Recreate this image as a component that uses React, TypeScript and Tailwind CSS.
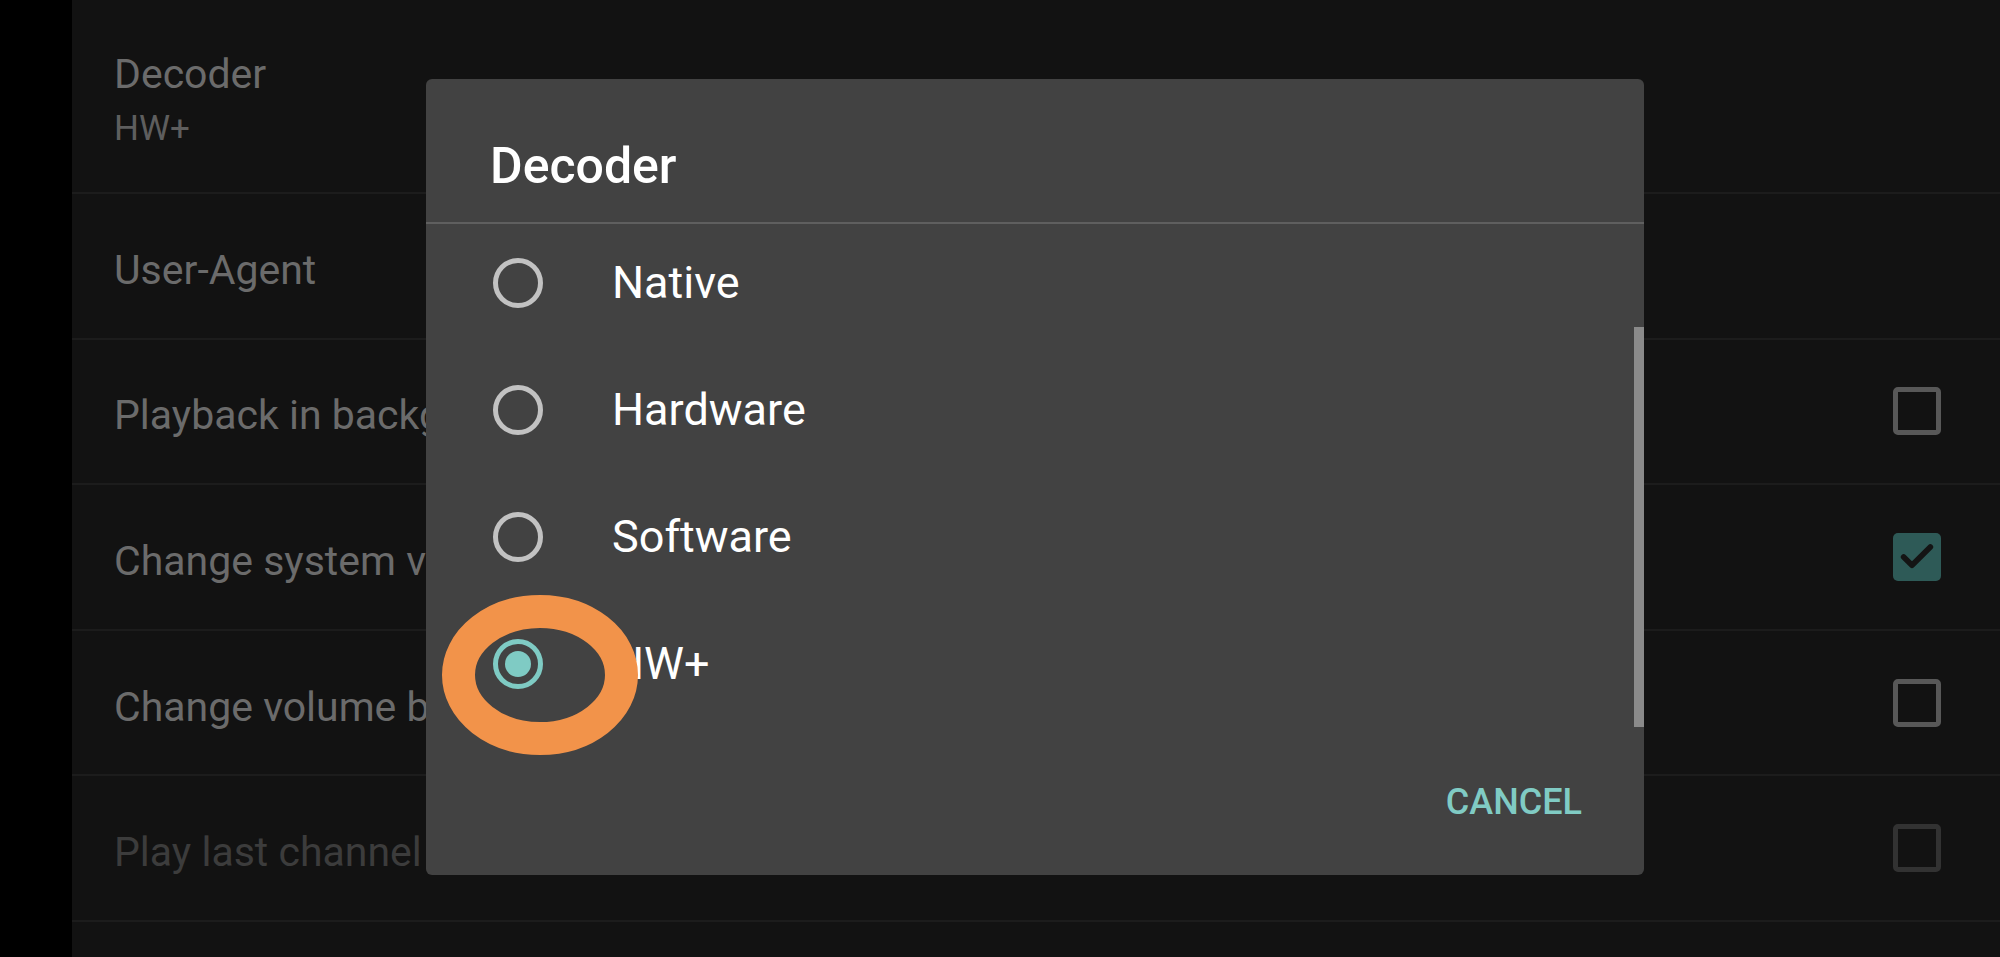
import { Check } from "lucide-react";

const rows = [
  { label: "User-Agent", box: null },
  { label: "Playback in background", box: "off" },
  { label: "Change system volume", box: "on" },
  { label: "Change volume by gestures", box: "off" },
  { label: "Play last channel on startup", box: "disabled" },
];

const options = ["Native", "Hardware", "Software", "HW+"];

function Box({ state }: { state: string }) {
  if (state === "on") {
    return (
      <div className="w-[48px] h-[48px] rounded-[5px] bg-[#2e5a57] flex items-center justify-center">
        <Check className="w-[40px] h-[40px] text-[#141414]" strokeWidth={3.4} />
      </div>
    );
  }
  return (
    <div
      className={
        state === "disabled"
          ? "w-[48px] h-[48px] rounded-[5px] border-[5px] border-[#323232]"
          : "w-[48px] h-[48px] rounded-[5px] border-[5px] border-[#585858]"
      }
    />
  );
}

export default function App() {
  return (
    <div className="w-[2000px] h-[957px] flex bg-black overflow-hidden font-['Roboto','Liberation_Sans',sans-serif]">
      <div className="w-[72px] shrink-0 bg-black" />

      <div className="relative flex-1 bg-[#121212]">
        {/* settings list behind the dialog */}
        <div className="flex flex-col">
          <div className="h-[194px] border-b-2 border-[#1c1c1c] pl-[42px] pt-[50px]">
            <div className="text-[41px] leading-[48px] text-[#6b6b6b]">Decoder</div>
            <div className="mt-[10px] text-[35px] leading-[42px] text-[#5e5e5e]">HW+</div>
          </div>

          {rows.map((r) => (
            <div
              key={r.label}
              className="h-[145.6px] border-b-2 border-[#1c1c1c] flex items-center justify-between pl-[42px] pr-[59px] pt-[8px]"
            >
              <span
                className={
                  r.box === "disabled"
                    ? "text-[41px] leading-[48px] text-[#3c3c3c] whitespace-nowrap"
                    : "text-[41px] leading-[48px] text-[#6b6b6b] whitespace-nowrap"
                }
              >
                {r.label}
              </span>
              {r.box && (
                <div className="-mt-[8px]">
                  <Box state={r.box} />
                </div>
              )}
            </div>
          ))}
        </div>

        {/* dialog */}
        <div className="absolute left-[354px] top-[79px] w-[1218px] h-[796px] rounded-[6px] bg-[#424242] flex flex-col">
          <div className="pt-[59px] pl-[64px] text-[50px] leading-[56px] font-medium text-white">
            Decoder
          </div>
          <div className="mt-[28px] h-[2px] bg-[#5f5f5f]" />

          <div className="h-[511px] overflow-hidden">
            <div className="-mt-[5px] flex flex-col">
              {options.map((o) => (
                <div key={o} className="h-[127px] flex items-center pl-[67px]">
                  {o === "HW+" ? (
                    <div className="w-[50px] h-[50px] rounded-full border-[5px] border-[#7fcbc4] flex items-center justify-center">
                      <div className="w-[26px] h-[26px] rounded-full bg-[#7fcbc4]" />
                    </div>
                  ) : (
                    <div className="w-[50px] h-[50px] rounded-full border-[5px] border-[#c2c2c2]" />
                  )}
                  <span className="ml-[69px] text-[45px] leading-[54px] text-white">{o}</span>
                </div>
              ))}
            </div>
          </div>

          <div className="flex justify-end pt-[45px] pr-[62px]">
            <span className="text-[36px] leading-[44px] font-medium text-[#80cbc4]">CANCEL</span>
          </div>

          {/* scroll thumb */}
          <div className="absolute right-0 top-[248px] w-[10px] h-[400px] bg-[#8a8a8a]" />

          {/* orange highlight ring */}
          <svg className="absolute left-[14px] top-[511px]" width="200" height="170" viewBox="0 0 200 170">
            <ellipse cx="100" cy="85" rx="81.5" ry="63.5" fill="none" stroke="#f2934a" strokeWidth="33" />
          </svg>
        </div>
      </div>
    </div>
  );
}
